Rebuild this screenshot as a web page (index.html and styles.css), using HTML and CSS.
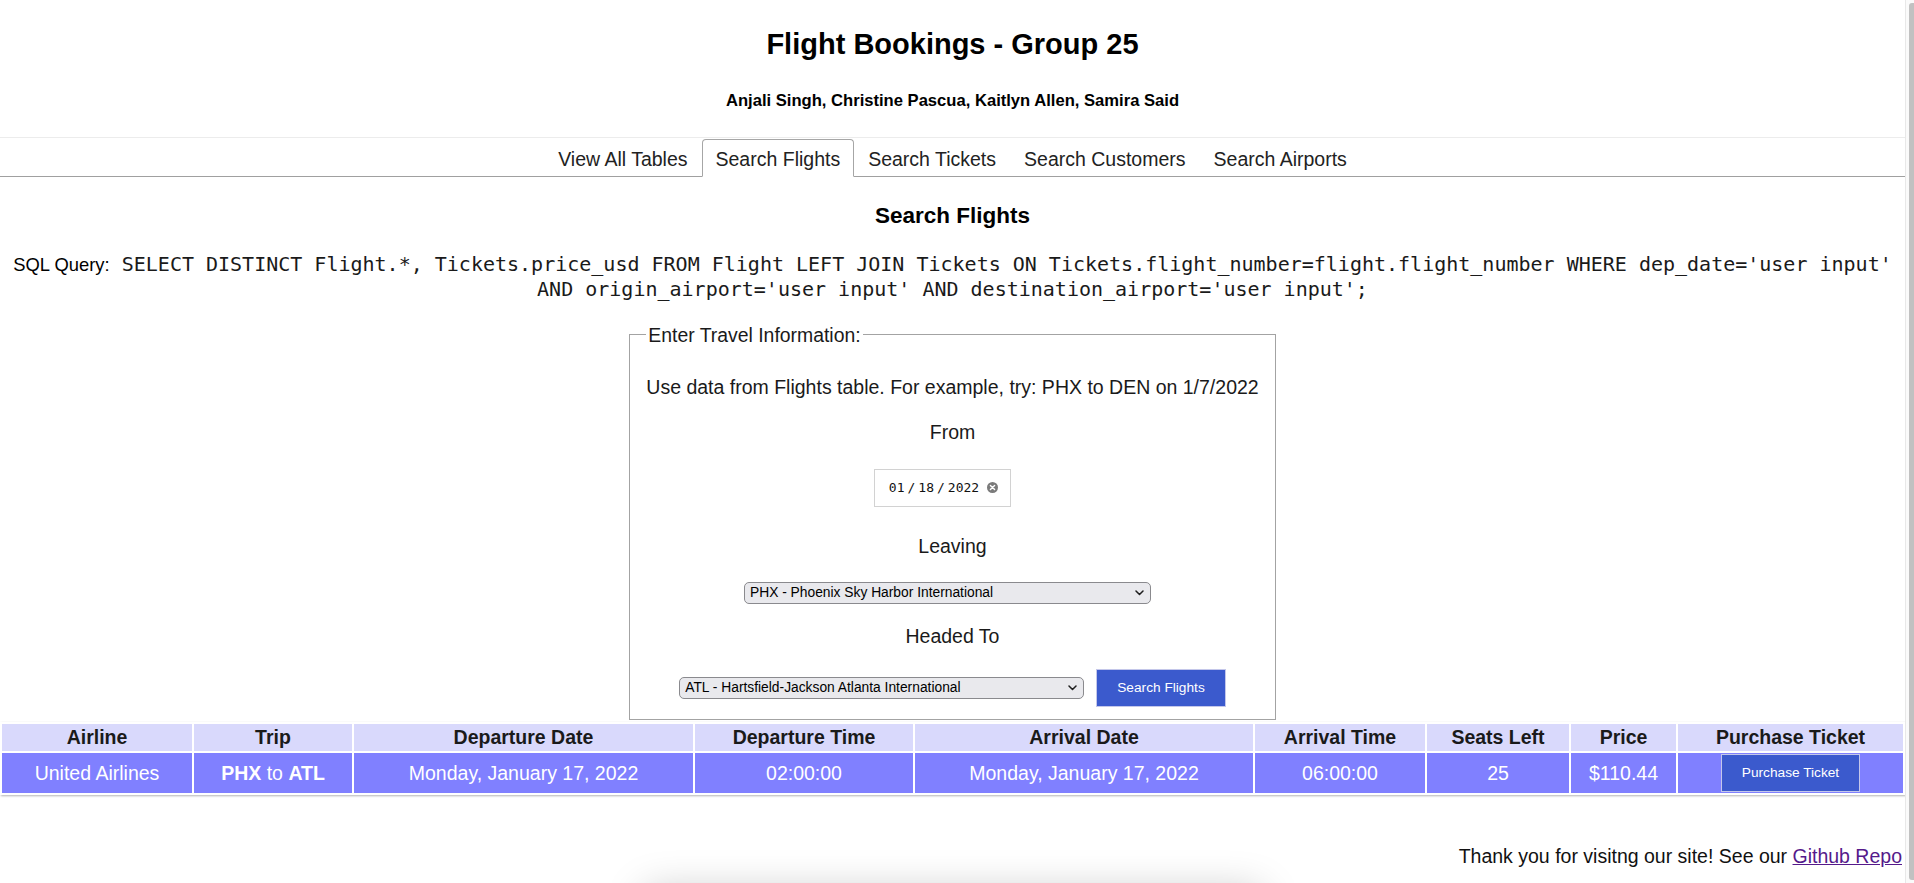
FILE: index.html
```html
<!DOCTYPE html>
<html lang="en">
<head>
<meta charset="utf-8">
<title>Flight Bookings - Group 25</title>
<link rel="stylesheet" href="styles.css">
</head>
<body>
<div class="page">
  <header class="site-header">
    <h1 class="title">Flight Bookings - Group 25</h1>
    <h4 class="authors">Anjali Singh, Christine Pascua, Kaitlyn Allen, Samira Said</h4>
  </header>

  <nav class="tabs">
    <a class="tab" href="#">View All Tables</a>
    <a class="tab active" href="#">Search Flights</a>
    <a class="tab" href="#">Search Tickets</a>
    <a class="tab" href="#">Search Customers</a>
    <a class="tab" href="#">Search Airports</a>
  </nav>

  <main class="content">
    <h3 class="section-title">Search Flights</h3>
    <p class="sql"><span class="sql-label">SQL Query:</span><code class="sql-code"> SELECT DISTINCT Flight.*, Tickets.price_usd FROM Flight LEFT JOIN Tickets ON Tickets.flight_number=flight.flight_number WHERE dep_date='user input' AND origin_airport='user input' AND destination_airport='user input';</code></p>

    <form class="search-form">
      <fieldset class="travel">
        <legend class="travel-legend">Enter Travel Information:</legend>
        <div class="stack">
          <p class="hint">Use data from Flights table. For example, try: PHX to DEN on 1/7/2022</p>
          <label class="field-label from-label">From</label>
          <div class="date-field">
            <span>01</span><span>/</span><span>18</span><span>/</span><span>2022</span>
            <svg class="clear" width="11" height="11" viewBox="0 0 11 11"><circle cx="5.5" cy="5.5" r="5.5" fill="#7b7b7b"/><path d="M3.4 3.4l4.2 4.2M7.6 3.4l-4.2 4.2" stroke="#fff" stroke-width="1.4" stroke-linecap="round"/></svg>
          </div>
          <label class="field-label leaving-label">Leaving</label>
          <div class="select select-origin">
            <select>
              <option selected>PHX - Phoenix Sky Harbor International</option>
              <option>DEN - Denver International</option>
              <option>ATL - Hartsfield-Jackson Atlanta International</option>
            </select>
            <svg class="chev" width="9" height="6" viewBox="0 0 9 6"><path d="M1 1l3.5 3.5L8 1" fill="none" stroke="#1f1f1f" stroke-width="1.5" stroke-linecap="round" stroke-linejoin="round"/></svg>
          </div>
          <label class="field-label headed-label">Headed To</label>
          <div class="row">
            <div class="select select-dest">
              <select>
                <option selected>ATL - Hartsfield-Jackson Atlanta International</option>
                <option>DEN - Denver International</option>
                <option>PHX - Phoenix Sky Harbor International</option>
              </select>
              <svg class="chev" width="9" height="6" viewBox="0 0 9 6"><path d="M1 1l3.5 3.5L8 1" fill="none" stroke="#1f1f1f" stroke-width="1.5" stroke-linecap="round" stroke-linejoin="round"/></svg>
            </div>
            <button type="button" class="btn">Search Flights</button>
          </div>
        </div>
      </fieldset>
    </form>

    <table class="results">
      <colgroup>
        <col class="col-airline">
        <col class="col-trip">
        <col class="col-depdate">
        <col class="col-deptime">
        <col class="col-arrdate">
        <col class="col-arrtime">
        <col class="col-seats">
        <col class="col-price">
        <col class="col-purchase">
      </colgroup>
      <thead>
        <tr>
          <th>Airline</th>
          <th>Trip</th>
          <th>Departure Date</th>
          <th>Departure Time</th>
          <th>Arrival Date</th>
          <th>Arrival Time</th>
          <th>Seats Left</th>
          <th>Price</th>
          <th>Purchase Ticket</th>
        </tr>
      </thead>
      <tbody>
        <tr>
          <td>United Airlines</td>
          <td><b>PHX</b> to <b>ATL</b></td>
          <td>Monday, January 17, 2022</td>
          <td>02:00:00</td>
          <td>Monday, January 17, 2022</td>
          <td>06:00:00</td>
          <td>25</td>
          <td>$110.44</td>
          <td><button type="button" class="btn">Purchase Ticket</button></td>
        </tr>
      </tbody>
    </table>
  </main>

  <footer class="site-footer">Thank you for visitng our site! See our <a class="repo-link" href="#">Github Repo</a></footer>
  <div class="glow"></div>
</div>
<aside class="scrollbar"><div class="thumb"></div></aside>
</body>
</html>
```

FILE: styles.css
```css
html {
  overflow: hidden;
}

body {
  margin: 0;
  display: flex;
  align-items: flex-start;
  font-family: "Liberation Sans", Arial, Helvetica, sans-serif;
  font-size: 19.5px;
  color: #1a1a1a;
  background: #fff;
}

.page {
  flex: 1;
  min-width: 0;
}

/* faux scrollbar */
.scrollbar {
  flex: none;
  width: 9px;
  height: 100vh;
  box-sizing: border-box;
  border-left: 1px solid #e8e8e8;
  background: #fafafa;
  padding: 3px 0 3px 3px;
}

.thumb {
  height: 100%;
  background: #c1c1c1;
  border-radius: 3px 0 0 3px;
}

/* header */
.site-header {
  text-align: center;
  padding: 27px 0 26px;
  border-bottom: 1px solid #ececec;
}

.title {
  margin: 0;
  font-size: 29px;
  line-height: 34px;
  font-weight: 700;
  color: #000;
}

.authors {
  margin: 30px 0 0;
  font-size: 16.6px;
  line-height: 20px;
  font-weight: 700;
  color: #000;
}

/* tabs */
.tabs {
  display: flex;
  justify-content: center;
  padding-top: 1px;
  border-bottom: 1px solid #a0a0a0;
}

.tab {
  margin-bottom: -1px;
  padding: 8px 13px 6px;
  border: 1px solid transparent;
  border-radius: 4px 4px 0 0;
  font-size: 19.5px;
  line-height: 22px;
  color: #222;
  text-decoration: none;
}

.tab.active {
  border-color: #a6a6a6 #a6a6a6 #fff;
  background: #fff;
}

/* content */
.section-title {
  margin: 26px 0 0;
  font-size: 22.5px;
  line-height: 26px;
  font-weight: 700;
  text-align: center;
  color: #000;
}

.sql {
  margin: 22.5px 0 0;
  text-align: center;
  line-height: 25px;
}

.sql-label {
  font-size: 18.4px;
  color: #000;
}

.sql-code {
  font-family: "DejaVu Sans Mono", "Liberation Mono", monospace;
  font-size: 20px;
  color: #1a1a1a;
}

.search-form {
  margin: 22px 0 0;
}

.travel {
  width: fit-content;
  margin: 0 auto;
  padding: 0 16px 12px;
  border: 1px solid #a3a3a3;
}

.travel-legend {
  padding: 0 2px;
  font-size: 19.4px;
  line-height: 22px;
  color: #1a1a1a;
}

.stack {
  display: flex;
  flex-direction: column;
  align-items: center;
}

.hint {
  margin: 30px 0 0;
  line-height: 22px;
}

.field-label {
  display: block;
  line-height: 22px;
}

.from-label { margin-top: 23px; }
.leaving-label { margin-top: 28px; }
.headed-label { margin-top: 21px; }

.date-field {
  display: flex;
  align-items: center;
  gap: 3px;
  height: 38px;
  box-sizing: border-box;
  margin: 26px 20px 0 0;
  padding: 0 12px 0 14px;
  border: 1px solid #d2d2d2;
  font-family: "DejaVu Sans Mono", "Liberation Mono", monospace;
  font-size: 13px;
  color: #111;
}

.clear {
  margin-left: 5px;
}

.select {
  position: relative;
}

.select select {
  display: block;
  width: 100%;
  height: 22px;
  box-sizing: border-box;
  margin: 0;
  padding: 0 24px 0 5px;
  appearance: none;
  -webkit-appearance: none;
  border: 1px solid #8a8a8e;
  border-radius: 5px;
  background: #e9e9ed;
  font-family: "Liberation Sans", Arial, sans-serif;
  font-size: 13.8px;
  color: #000;
}

.select .chev {
  position: absolute;
  right: 7px;
  top: 8px;
  pointer-events: none;
}

.select-origin {
  width: 407px;
  margin: 25px 10px 0 0;
}

.select-dest {
  width: 405px;
}

.row {
  display: flex;
  align-items: center;
  gap: 12px;
  margin-top: 22px;
}

.btn {
  height: 38px;
  margin: 0;
  padding: 0 20px;
  border: 1px solid #c4c7ea;
  border-radius: 0;
  background: #3b5acd;
  color: #fff;
  font-family: "Liberation Sans", Arial, sans-serif;
  font-size: 13.7px;
  cursor: pointer;
  vertical-align: middle;
}

/* results table */
.results {
  width: 100%;
  table-layout: fixed;
  border-spacing: 2px;
  margin-top: 2px;
  box-shadow: 1px 1px 2px rgba(0, 0, 0, 0.3);
}

.col-airline { width: 190px; }
.col-trip { width: 158px; }
.col-depdate { width: 339px; }
.col-deptime { width: 218px; }
.col-arrdate { width: 338px; }
.col-arrtime { width: 170px; }
.col-seats { width: 142px; }
.col-price { width: 105px; }
.col-purchase { width: 225px; }

.results th {
  padding: 1px 0;
  background: #d9d9fc;
  font-size: 19.5px;
  line-height: 25px;
  font-weight: 700;
  color: #1a1a1a;
  text-align: center;
}

.results td {
  padding: 1px 0;
  height: 38px;
  background: #8080ff;
  color: #fff;
  font-size: 19.5px;
  line-height: 22px;
  text-align: center;
}

/* footer */
.site-footer {
  margin-top: 50px;
  padding-right: 3px;
  text-align: right;
  line-height: 22px;
  color: #111;
}

.repo-link {
  color: #551a8b;
}

.glow {
  width: 600px;
  height: 60px;
  margin: 32px auto 0;
  background: #fff;
  box-shadow: 0 0 40px 8px rgba(0, 0, 0, 0.22);
}
```
